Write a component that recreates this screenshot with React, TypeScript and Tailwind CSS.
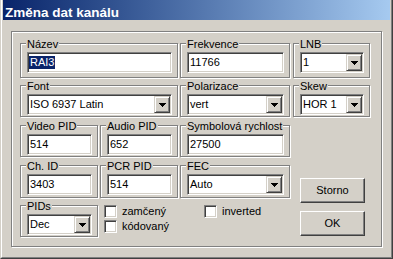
import React from "react";

const sunken =
  "border border-t-[#808080] border-l-[#808080] border-b-white border-r-white shadow-[inset_1px_1px_0_#404040,inset_-1px_-1px_0_#d4d0c8]";

function Group({ label, className, children }: { label: string; className: string; children?: React.ReactNode }) {
  return (
    <div
      className={`relative border border-[#808080] shadow-[inset_1px_1px_0_#fff,1px_1px_0_#fff] pl-[6px] pr-[5px] pt-[8px] ${className}`}
    >
      <span className="absolute -top-[6px] left-[5px] px-[1px] bg-[#d4d0c8] leading-[13px] whitespace-nowrap">{label}</span>
      {children}
    </div>
  );
}

function TextBox({ value, selected }: { value: string; selected?: boolean }) {
  return (
    <div className={`h-[21px] bg-white ${sunken} flex items-center pl-[1px] leading-[13px]`}>
      {selected ? (
        <span className="bg-[#0a246a] text-white px-[1px]">{value}</span>
      ) : (
        <span className="pl-[1px]">{value}</span>
      )}
    </div>
  );
}

function Arrow() {
  return (
    <svg width="7" height="4" shapeRendering="crispEdges">
      <rect x="0" y="0" width="7" height="1" fill="#000" />
      <rect x="1" y="1" width="5" height="1" fill="#000" />
      <rect x="2" y="2" width="3" height="1" fill="#000" />
      <rect x="3" y="3" width="1" height="1" fill="#000" />
    </svg>
  );
}

function Combo({ value }: { value: string }) {
  return (
    <div className={`h-[21px] bg-white ${sunken} flex items-center pl-[2px] pr-[1px] leading-[13px]`}>
      <span className="flex-1">{value}</span>
      <div className="w-[16px] h-[17px] bg-[#d4d0c8] border border-t-[#d4d0c8] border-l-[#d4d0c8] border-b-[#404040] border-r-[#404040] shadow-[inset_1px_1px_0_#fff,inset_-1px_-1px_0_#808080] flex items-center justify-center">
        <Arrow />
      </div>
    </div>
  );
}

function Check({ label }: { label: string }) {
  return (
    <div className="flex items-center h-[13px]">
      <div className={`w-[13px] h-[13px] bg-white ${sunken}`} />
      <span className="ml-[5px] leading-[13px] whitespace-nowrap">{label}</span>
    </div>
  );
}

function Button({ label, className }: { label: string; className?: string }) {
  return (
    <div
      className={`w-[65px] h-[25px] flex items-center justify-center border border-t-white border-l-white border-b-[#404040] border-r-[#404040] shadow-[inset_-1px_-1px_0_#808080] leading-[13px] ${className ?? ""}`}
    >
      {label}
    </div>
  );
}

export default function App() {
  return (
    <div className="w-[393px] h-[259px] bg-[#d4d0c8] text-[11px] text-black font-['Liberation_Sans',Arial,sans-serif] border-l border-l-[#d4d0c8] border-r border-r-[#404040] border-b border-b-[#404040]">
      <div className="h-full border-l border-l-white border-r border-r-[#808080] border-b border-b-[#808080] px-px pb-px flex flex-col">
        <div className="h-[20px] bg-linear-to-r from-[#0a246a] to-[#a6caf0] text-white font-bold text-[13.5px] pl-[2px] pt-[5px] leading-[15px] whitespace-nowrap overflow-hidden">
          Změna dat kanálu
        </div>
        <div className="ml-[8px] mt-[11px] w-[371px] h-[216px] border border-[#808080] shadow-[inset_1px_1px_0_#fff,1px_1px_0_#fff] pl-[8px] pt-[11px] flex gap-[3px]">
          <div className="w-[270px] flex flex-col">
            <div className="flex gap-[2px]">
              <Group label="Název" className="w-[158px] h-[35px]">
                <TextBox value="RAI3" selected />
              </Group>
              <Group label="Frekvence" className="w-[110px] h-[35px]">
                <TextBox value="11766" />
              </Group>
            </div>
            <div className="flex gap-[2px] mt-[7px]">
              <Group label="Font" className="w-[158px] h-[32px]">
                <Combo value="ISO 6937 Latin" />
              </Group>
              <Group label="Polarizace" className="w-[110px] h-[32px]">
                <Combo value="vert" />
              </Group>
            </div>
            <div className="flex gap-[2px] mt-[8px]">
              <Group label="Video PID" className="w-[78px] h-[32px]">
                <TextBox value="514" />
              </Group>
              <Group label="Audio PID" className="w-[78px] h-[32px]">
                <TextBox value="652" />
              </Group>
              <Group label="Symbolová rychlost" className="w-[110px] h-[32px]">
                <TextBox value="27500" />
              </Group>
            </div>
            <div className="flex gap-[2px] mt-[8px]">
              <Group label="Ch. ID" className="w-[78px] h-[33px]">
                <TextBox value="3403" />
              </Group>
              <Group label="PCR PID" className="w-[78px] h-[33px]">
                <TextBox value="514" />
              </Group>
              <Group label="FEC" className="w-[110px] h-[33px]">
                <Combo value="Auto" />
              </Group>
            </div>
            <div className="flex mt-[7px]">
              <Group label="PIDs" className="w-[78px] h-[32px]">
                <Combo value="Dec" />
              </Group>
              <div className="ml-[6px] w-[100px] flex flex-col gap-[2px]">
                <Check label="zamčený" />
                <Check label="kódovaný" />
              </div>
              <div>
                <Check label="inverted" />
              </div>
            </div>
          </div>
          <div className="w-[77px] flex flex-col">
            <Group label="LNB" className="w-[77px] h-[35px]">
              <Combo value="1" />
            </Group>
            <Group label="Skew" className="w-[77px] h-[32px] mt-[7px]">
              <Combo value="HOR 1" />
            </Group>
            <Button label="Storno" className="ml-[7px] mt-[61px]" />
            <Button label="OK" className="ml-[7px] mt-[8px]" />
          </div>
        </div>
      </div>
    </div>
  );
}
